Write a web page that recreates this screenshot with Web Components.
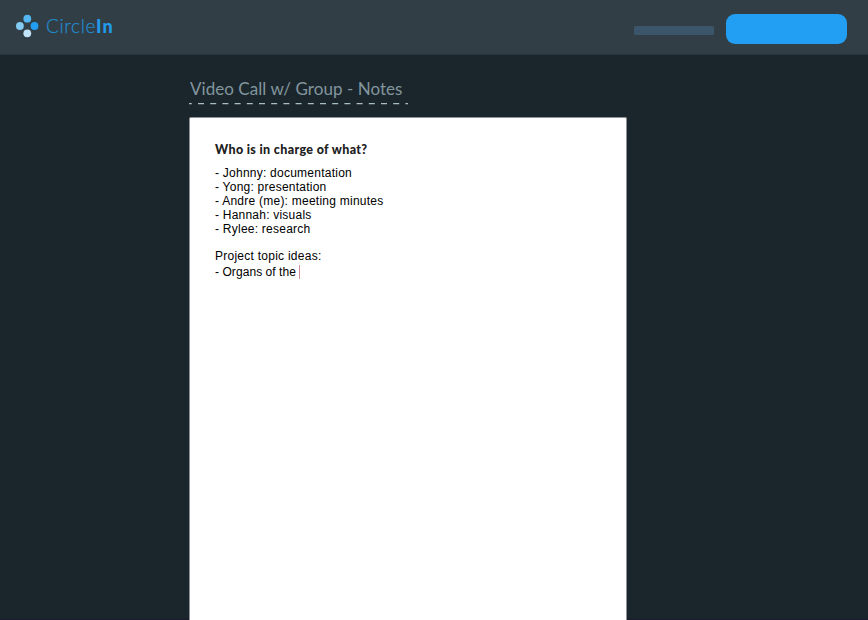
<!DOCTYPE html>
<html lang="en">
<head>
<meta charset="utf-8">
<title>CircleIn Notes</title>
<style>
html, body { margin: 0; height: 100%; overflow: hidden; background: #1b262c; }
</style>
</head>
<body>
<circlein-app></circlein-app>
<script>
const define = (name, html, connected) => {
  const template = document.createElement('template');
  template.innerHTML = html;
  customElements.define(name, class extends HTMLElement {
    constructor() {
      super();
      this.attachShadow({ mode: 'open' }).append(template.content.cloneNode(true));
    }
    connectedCallback() { if (connected) connected(this); }
  });
};

// A single line of text whose tracking is set so that it spans the given width.
define('fit-text', `
<style>
:host { display: flex; width: max-content; }
span { display: block; white-space: pre; }
</style><span><slot></slot></span>`, el => {
  const span = el.shadowRoot.querySelector('span');
  const gap = (Number(el.getAttribute('width')) - span.getBoundingClientRect().width) / el.textContent.length;
  span.style.letterSpacing = gap + 'px';
});

define('circlein-logo', `
<style>
:host { display: flex; align-items: flex-start; gap: 7px; font-family: Lato, sans-serif; color: #2289cb; }
svg { display: block; }
.word { display: flex; font-size: 19px; line-height: 24px; font-weight: 300; }
.word fit-text:first-child { -webkit-text-stroke: .25px #2289cb; }
.in { font-weight: 900; font-size: 18px; color: #219bec; }
</style>
<svg width="24" height="24" viewBox="0 0 24 24">
<circle cx="12.3" cy="4.7" r="3.9" fill="#55b5ee"/>
<circle cx="4.9" cy="12" r="3.9" fill="#83caf3"/>
<circle cx="19.5" cy="12" r="3.9" fill="#219ef2"/>
<circle cx="12.3" cy="19.3" r="3.9" fill="#c2e5fa"/>
</svg>
<div class="word"><fit-text width="50">Circle</fit-text><fit-text class="in" width="18">In</fit-text></div>`);

define('app-header', `
<style>
:host { display: flex; box-sizing: border-box; height: 55px; padding: 14px 21px 0 15px; background: #323e45; border-bottom: 1px solid #27343b; justify-content: space-between; align-items: flex-start; }
.actions { display: flex; gap: 12px; align-items: flex-start; }
.link { width: 80px; height: 9px; margin-top: 12px; border-radius: 1.5px; background: #3b566a; }
.button { width: 121px; height: 29.5px; border-radius: 9px; background: #229ff3; }
</style>
<circlein-logo></circlein-logo>
<div class="actions"><div class="link"></div><div class="button"></div></div>`);

define('note-title', `
<style>
:host { display: block; width: 219px; height: 28px; font: 400 17px/28px Lato, sans-serif; color: #82959e; }
fit-text { padding-left: 1px; }
svg { display: block; }
</style>
<fit-text width="212.5">Video Call w/ Group - Notes</fit-text>
<svg width="219" height="2"><path d="M0 .7H219" stroke="#a9bdc4" stroke-width="1.3" stroke-dasharray="6 6.2" stroke-dashoffset="3.2"/></svg>`);

define('note-page', `
<style>
:host { display: block; box-sizing: border-box; width: 438px; height: 503px; padding: 24px 25px 0; background: #fff; border: 1px solid #8d9295; border-bottom: 0; border-radius: 2px 2px 0 0; font: 12px/14px "Liberation Sans", Arial, sans-serif; color: #000; }
h1 { margin: 0 0 8px; font: 900 12.5px/16px Lato, sans-serif; color: #202020; }
.ideas { margin-top: 13px; }
.entry { display: flex; gap: 3px; margin-top: 2px; align-items: center; }
.caret { width: 1px; height: 14px; background: #d28e94; }
</style>
<h1><fit-text width="152.5">Who is in charge of what?</fit-text></h1>
<fit-text width="137">- Johnny: documentation</fit-text>
<fit-text width="111.5">- Yong: presentation</fit-text>
<fit-text width="168.5">- Andre (me): meeting minutes</fit-text>
<fit-text width="96.5">- Hannah: visuals</fit-text>
<fit-text width="95.5">- Rylee: research</fit-text>
<fit-text class="ideas" width="106.5">Project topic ideas:</fit-text>
<div class="entry"><fit-text width="81">- Organs of the</fit-text><div class="caret"></div></div>`);

define('circlein-app', `
<style>
:host { display: flex; flex-direction: column; height: 620px; background: #1b262c; box-sizing: border-box; border-bottom: 1px solid #1b1c2d; }
main { display: flex; flex-direction: column; padding: 20px 0 0 189px; gap: 14px; }
note-page { margin-bottom: -1px; }
</style>
<app-header></app-header>
<main>
<note-title></note-title>
<note-page></note-page>
</main>`);
</script>
</body>
</html>
